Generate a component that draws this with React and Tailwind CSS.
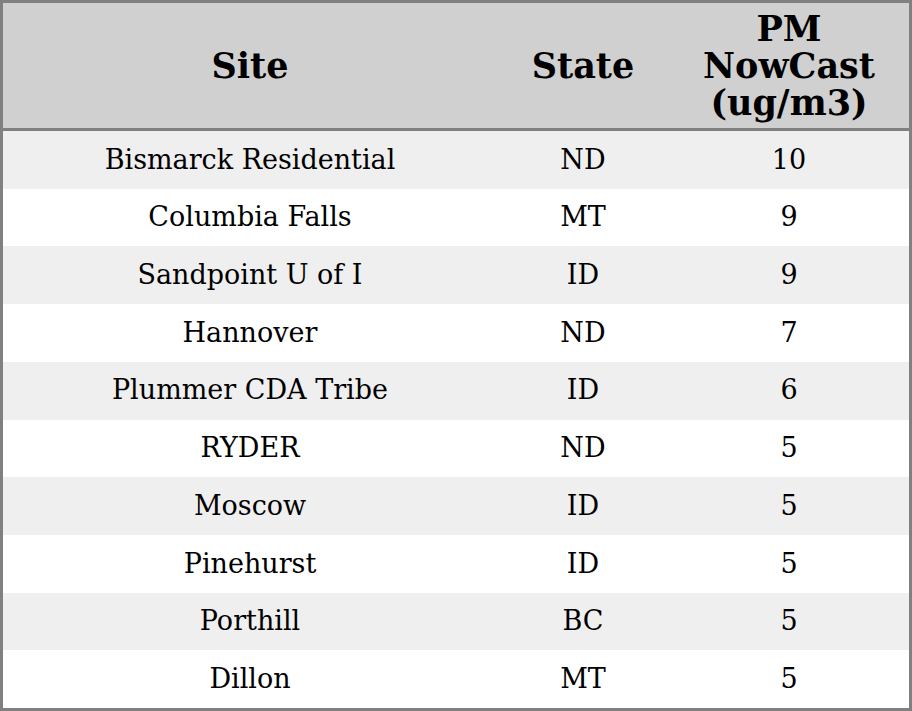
const rows = [
    ["Bismarck Residential", "ND", "10"],
    ["Columbia Falls", "MT", "9"],
    ["Sandpoint U of I", "ID", "9"],
    ["Hannover", "ND", "7"],
    ["Plummer CDA Tribe", "ID", "6"],
    ["RYDER", "ND", "5"],
    ["Moscow", "ID", "5"],
    ["Pinehurst", "ID", "5"],
    ["Porthill", "BC", "5"],
    ["Dillon", "MT", "5"],
];

export default function App() {
    return (
        <div className="w-[912px] h-[711px] bg-white font-['DejaVu_Serif',serif] text-black">
            <div className="h-full border-[3px] border-[#808080] flex flex-col">
                <div className="grid grid-cols-[494px_172px_1fr] h-[128px] bg-[#d0d0d0] border-b-[3px] border-[#808080] font-bold text-[35px] leading-[37px] text-center">
                    <div className="flex items-center justify-center">Site</div>
                    <div className="flex items-center justify-center">State</div>
                    <div className="flex items-center justify-center">
                        PM<br />NowCast<br />(ug/m3)
                    </div>
                </div>
                <div className="flex-1 flex flex-col">
                    {rows.map((r, i) => (
                        <div
                            key={i}
                            className={`flex-1 grid grid-cols-[494px_172px_1fr] text-[27px] text-center items-center ${i % 2 === 0 ? "bg-[#efefef]" : "bg-white"}`}
                        >
                            <div>{r[0]}</div>
                            <div>{r[1]}</div>
                            <div>{r[2]}</div>
                        </div>
                    ))}
                </div>
            </div>
        </div>
    );
}
